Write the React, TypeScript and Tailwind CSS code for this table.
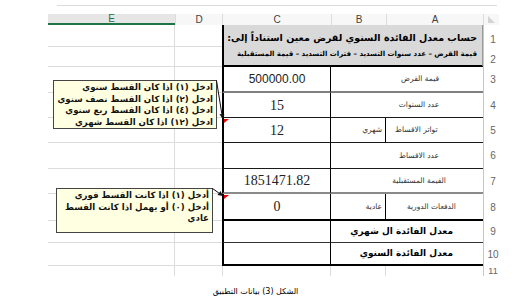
import React from "react";

const AR = "font-['DejaVu_Sans',sans-serif]";

function RowNum({ row, n, low }: { row: string; n: string; low?: boolean }) {
  return (
    <div
      className={`${row} col-start-6 border-l border-[#c8c8c8] flex justify-center pl-[3px] text-[10px] leading-none text-[#666] ${
        low ? "items-end pb-[2px]" : "items-center"
      }`}
    >
      {n}
    </div>
  );
}

export default function App() {
  const rows = [
    "row-start-2",
    "row-start-3",
    "row-start-4",
    "row-start-5",
    "row-start-6",
    "row-start-7",
    "row-start-8",
    "row-start-9",
    "row-start-10",
    "row-start-11",
    "row-start-12",
  ];
  const cB = "col-start-3 border-l-2 border-l-black border-r border-r-black flex items-center justify-center";
  return (
    <div className="relative w-[518px] h-[302px] bg-white overflow-hidden font-['Liberation_Sans',sans-serif]">
      <div className="pt-[5px] pl-[57px]">
        <div className="w-[440px] h-px bg-[#dcdcdc]" />
      </div>
      <div className="mt-[8px] ml-[48px] grid grid-cols-[127px_47px_109px_55px_97px_16px] grid-rows-[11px_22px_20px_26px_25px_25px_26px_25px_27px_22px_23px_10px]">
        {/* header row */}
        <div className="col-start-1 row-start-1 bg-[#e6e6e6] border-b-2 border-[#217346] flex items-center justify-center text-[10px] leading-none text-[#217346]">
          E
        </div>
        <div className="col-start-2 row-start-1 bg-[#f7f7f7] border-l border-[#dcdcdc] flex items-center justify-center text-[10px] leading-none text-[#444]">
          D
        </div>
        <div className="col-start-3 row-start-1 bg-[#f7f7f7] border-l border-[#dcdcdc] flex items-center justify-center text-[10px] leading-none text-[#444]">
          C
        </div>
        <div className="col-start-4 row-start-1 bg-[#f7f7f7] border-l border-[#dcdcdc] flex items-center justify-center text-[10px] leading-none text-[#444]">
          B
        </div>
        <div className="col-start-5 row-start-1 bg-[#f7f7f7] border-l border-[#dcdcdc] flex items-center justify-center text-[10px] leading-none text-[#444]">
          A
        </div>
        <div className="col-start-6 row-start-1 bg-[#f7f7f7] border-l border-[#dcdcdc] flex items-end justify-center pb-[2px]">
          <svg width="7" height="7" viewBox="0 0 7 7">
            <polygon points="0,0 7,7 0,7" fill="#d4d4d4" />
          </svg>
        </div>

        {/* E / D gridlines */}
        {rows.map((r, i) => (
          <React.Fragment key={r}>
            <div className={`${r} col-start-1 border-r border-[#dcdcdc] ${i < 10 ? "border-b" : ""}`} />
            <div className={`${r} col-start-2 ${i < 10 ? "border-b border-[#dcdcdc]" : ""}`} />
          </React.Fragment>
        ))}

        {/* rows 1-2 merged title */}
        <div
          dir="rtl"
          className={`col-start-3 col-span-3 row-start-2 row-span-2 bg-[#d9d9d9] border-l-2 border-l-black border-b-2 border-b-black border-r border-r-[#9a9a9a] overflow-hidden flex flex-col pr-[5px] ${AR} text-black whitespace-nowrap`}
        >
          <div className="h-[20px] flex items-end text-[9.5px] font-bold leading-none pb-[3px]">
            حساب معدل الفائدة السنوي لقرض معين استناداً إلى:
          </div>
          <div className="h-[18px] flex items-center text-[7px] font-bold leading-none">
            قيمة القرض – عدد سنوات التسديد – فترات التسديد – قيمة المستقبلية
          </div>
        </div>

        {/* row 3 */}
        <div className={`row-start-4 ${cB} border-b-2 border-b-[#808080] text-[12px] text-[#222]`}>500000.00</div>
        <div dir="rtl" className={`row-start-4 col-start-4 col-span-2 border-b-2 border-b-[#808080] flex items-center justify-center pl-[26px] ${AR} text-[7.5px] text-[#333]`}>
          قيمة القرض
        </div>

        {/* row 4 */}
        <div className={`row-start-5 ${cB} border-b border-b-[#1a1a1a] font-['Liberation_Serif',serif] text-[14px] text-[#222]`}>15</div>
        <div dir="rtl" className={`row-start-5 col-start-4 col-span-2 border-b border-b-[#1a1a1a] flex items-center justify-center pl-[24px] ${AR} text-[7.5px] text-[#333]`}>
          عدد السنوات
        </div>

        {/* row 5 */}
        <div className={`row-start-6 ${cB} border-b border-b-[#1a1a1a] font-['Liberation_Serif',serif] text-[14px] text-[#222]`}>12</div>
        <div dir="rtl" className={`row-start-6 col-start-4 border-b border-b-[#1a1a1a] border-r border-r-black flex items-center justify-start pr-[3px] ${AR} text-[7.5px] text-[#333]`}>
          شهري
        </div>
        <div dir="rtl" className={`row-start-6 col-start-5 border-b border-b-[#1a1a1a] flex items-center justify-end pl-[9px] ${AR} text-[7.5px] text-[#333]`}>
          تواتر الاقساط
        </div>

        {/* row 6 */}
        <div className={`row-start-7 ${cB} border-b border-b-[#1a1a1a]`} />
        <div dir="rtl" className={`row-start-7 col-start-4 col-span-2 border-b border-b-[#1a1a1a] flex items-center justify-center pl-[24px] ${AR} text-[7.5px] text-[#333]`}>
          عدد الاقساط
        </div>

        {/* row 7 */}
        <div className={`row-start-8 ${cB} border-b-2 border-b-[#8a8a8a] font-['Liberation_Serif',serif] text-[14px] text-[#222]`}>1851471.82</div>
        <div dir="rtl" className={`row-start-8 col-start-4 col-span-2 border-b-2 border-b-[#8a8a8a] flex items-center justify-center pl-[24px] ${AR} text-[7.5px] text-[#333]`}>
          القيمة المستقبلية
        </div>

        {/* row 8 */}
        <div className={`row-start-9 ${cB} border-b-2 border-b-black font-['Liberation_Serif',serif] text-[14px] text-[#222]`}>0</div>
        <div dir="rtl" className={`row-start-9 col-start-4 border-b-2 border-b-black border-r border-r-black flex items-center justify-start pr-[3px] ${AR} text-[7.5px] text-[#333]`}>
          عادية
        </div>
        <div dir="rtl" className={`row-start-9 col-start-5 border-b-2 border-b-black flex items-center justify-end pl-[21px] ${AR} text-[7.5px] text-[#333]`}>
          الدفعات الدورية
        </div>

        {/* row 9 */}
        <div className={`row-start-10 ${cB} border-b border-b-[#333]`} />
        <div dir="rtl" className={`row-start-10 col-start-4 col-span-2 border-b border-b-[#333] flex items-center justify-start pr-[30px] ${AR} text-[9px] font-bold text-black`}>
          معدل الفائدة ال شهري
        </div>

        {/* row 10 */}
        <div className={`row-start-11 ${cB} border-b-2 border-b-black`} />
        <div dir="rtl" className={`row-start-11 col-start-4 col-span-2 border-b-2 border-b-black flex items-center justify-start pr-[30px] ${AR} text-[9px] font-bold text-black`}>
          معدل الفائدة السنوي
        </div>

        {/* row 11 */}
        <div className="row-start-12 col-start-3 border-l border-r border-[#dcdcdc]" />
        <div className="row-start-12 col-start-4 border-r border-[#dcdcdc]" />
        <div className="row-start-12 col-start-5" />

        {/* row numbers */}
        <RowNum row="row-start-2" n="1" low />
        <RowNum row="row-start-3" n="2" low />
        <RowNum row="row-start-4" n="3" />
        <RowNum row="row-start-5" n="4" />
        <RowNum row="row-start-6" n="5" />
        <RowNum row="row-start-7" n="6" />
        <RowNum row="row-start-8" n="7" />
        <RowNum row="row-start-9" n="8" />
        <RowNum row="row-start-10" n="9" />
        <RowNum row="row-start-11" n="10" />
        <div className="row-start-12 col-start-6 border-l border-[#c8c8c8] flex items-start justify-center pl-[3px] text-[9px] leading-none text-[#666] pt-[1px]">
          11
        </div>
      </div>

      {/* caption */}
      <div className="mt-[10px] flex justify-center pr-[7px]">
        <div dir="rtl" className={`${AR} text-[8px] leading-[12px] text-black`}>
          الشكل (3) بيانات التطبيق
        </div>
      </div>

      {/* comment 1 */}
      <div
        dir="rtl"
        className={`absolute left-[53px] top-[80px] w-[164px] h-[49px] bg-[#ffffe1] border border-[#444] pr-[3px] pt-[1px] ${AR} text-[8.6px] font-bold leading-[11.5px] text-[#111] whitespace-nowrap overflow-hidden`}
      >
        <div>ادخل (١) اذا كان القسط سنوي</div>
        <div>ادخل (٢) اذا كان القسط نصف سنوي</div>
        <div>ادخل (٤) اذا كان القسط ربع سنوي</div>
        <div>ادخل (١٢) اذا كان القسط شهري</div>
      </div>

      {/* comment 2 */}
      <div
        dir="rtl"
        className={`absolute left-[56px] top-[188px] w-[157px] h-[45px] bg-[#ffffe1] border border-[#444] pr-[3px] pt-[1px] ${AR} text-[8.6px] font-bold leading-[11.5px] text-[#111] whitespace-nowrap overflow-hidden`}
      >
        <div>أدخل (١) اذا كانت القسط  فوري</div>
        <div>أدخل (٠) أو يهمل اذا كانت القسط</div>
        <div>عادي</div>
      </div>

      {/* arrows and comment markers */}
      <svg className="absolute left-0 top-0 pointer-events-none" width="518" height="302" viewBox="0 0 518 302">
        <line x1="216.5" y1="80.5" x2="222" y2="115" stroke="#111" strokeWidth="1" />
        <polygon points="222.5,119 219.5,114 224.5,114.5" fill="#111" />
        <polygon points="224,119 229,119 224,123" fill="#e00" />
        <line x1="212.5" y1="188.5" x2="219.5" y2="193.5" stroke="#111" strokeWidth="1" />
        <polygon points="223,196 217.5,195 220.5,191" fill="#111" />
        <polygon points="224,195 229,195 224,199" fill="#e00" />
      </svg>
    </div>
  );
}
